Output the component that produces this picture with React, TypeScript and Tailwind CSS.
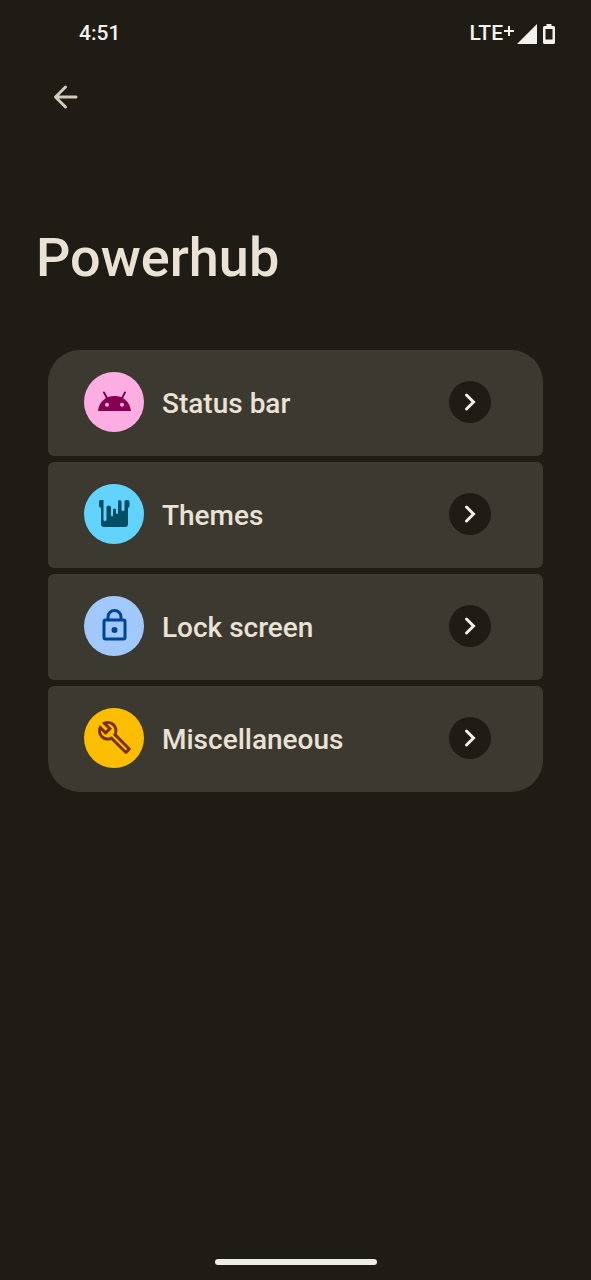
import type { ReactNode } from "react";

function StatusBar() {
  return (
    <header className="flex h-[68px] items-center justify-between pl-[79px] pr-9 text-[21px] font-medium text-[#f4f2ee]">
      <time>4:51</time>
      <div className="flex items-center">
        <span>LTE</span>
        <svg className="mb-1.5 ml-px h-[10px] w-[10px]" viewBox="0 0 10 10" stroke="currentColor" strokeWidth="2">
          <path d="M5 0v10M0 5h10" />
        </svg>
        <svg className="ml-[3px] h-5 w-5" viewBox="0 0 20 20" fill="currentColor" role="img" aria-label="Signal strength">
          <path d="M0 20 20 0v20z" />
        </svg>
        <svg className="ml-[6px] h-5 w-3" viewBox="0 0 12 20" fill="currentColor" role="img" aria-label="Battery">
          <path
            fillRule="evenodd"
            d="M3.500 0h5v2H10.500Q12 2 12 3.500v15Q12 20 10.500 20h-9Q0 20 0 18.500v-15Q0 2 1.500 2h2zM2.500 5v10.500h7V5z"
          />
        </svg>
      </div>
    </header>
  );
}

function AndroidIcon() {
  return (
    <svg viewBox="0 0 60 60" className="h-full w-full" aria-hidden="true">
      <path d="M20 20.500 23.500 27M41 20.500 37.500 27" stroke="#850052" strokeWidth="2" strokeLinecap="round" />
      <path
        fill="#850052"
        fillRule="evenodd"
        d="M14 39C15 30 21.500 24 30.500 24S46 30 47 39zM23 30.700a2 2 0 1 0 0 4 2 2 0 0 0 0-4zM38 30.700a2 2 0 1 0 0 4 2 2 0 0 0 0-4z"
      />
    </svg>
  );
}

function ThemesIcon() {
  return (
    <svg viewBox="0 0 60 60" className="h-full w-full" aria-hidden="true">
      <path
        fill="#004d66"
        d="M16.500 16H19.500V35.500Q19.500 37 21 37T22.500 35.500V23Q22.500 21.500 24.500 21.500T27 23V31Q27 32.500 28 32.500T29 31V26Q29 24.500 30.500 24.500T32 26V28.500Q32 30 33 30T34 28.500V17.500Q34 16 35.500 16T37.500 17.500V25.500Q37.500 27 39 27T40.500 25.500V17.500Q40.500 16 42 16H43.500Q45.500 16 45.500 18V22.500L44 24V40Q44 43 41 43H20Q17 43 17 40V24L15 22.500V18Q15 16 16.500 16z"
      />
    </svg>
  );
}

function LockIcon() {
  return (
    <svg viewBox="0 0 60 60" className="h-full w-full" fill="none" stroke="#004494" strokeWidth="3" aria-hidden="true">
      <rect x="20" y="24" width="21" height="19" rx="1.500" />
      <path d="M24 24v-3a6.500 6.500 0 0 1 13 0v3" />
      <circle cx="30.500" cy="34" r="3" fill="#004494" stroke="none" />
    </svg>
  );
}

function WrenchIcon() {
  return (
    <svg viewBox="0 0 60 60" className="h-full w-full" fill="#7d3300" aria-hidden="true">
      <path
        transform="translate(12.500 11.500) scale(1.500)"
        d="M22.610 18.990l-9.080-9.080c.93-2.340.45-5.100-1.440-7C9.790.61 6.210.4 3.660 2.260L7.500 6.110 6.080 7.520 2.250 3.690C.39 6.230.6 9.820 2.900 12.110c1.860 1.860 4.570 2.350 6.890 1.480l9.110 9.110c.39.39 1.020.39 1.410 0l2.300-2.300c.4-.38.4-1.010 0-1.410zm-3 1.600l-9.460-9.460c-.61.45-1.290.72-2 .82-1.360.2-2.790-.21-3.830-1.250C3.370 9.760 2.930 8.500 3 7.260l3.090 3.090 4.240-4.240-3.090-3.090c1.240-.07 2.490.37 3.440 1.310 1.080 1.080 1.490 2.570 1.240 3.960-.12.71-.42 1.370-.88 1.960l9.450 9.450-.88.89z"
      />
    </svg>
  );
}

type Entry = { label: string; href: string; badge: string; icon: ReactNode };

const entries: Entry[] = [
  { label: "Status bar", href: "#status-bar", badge: "bg-[#ffaee4]", icon: <AndroidIcon /> },
  { label: "Themes", href: "#themes", badge: "bg-[#62d3ff]", icon: <ThemesIcon /> },
  { label: "Lock screen", href: "#lock-screen", badge: "bg-[#a1c9ff]", icon: <LockIcon /> },
  { label: "Miscellaneous", href: "#miscellaneous", badge: "bg-[#fdbd00]", icon: <WrenchIcon /> },
];

function EntryRow({ label, href, badge, icon }: Entry) {
  return (
    <li className="overflow-hidden rounded-md bg-[#3c3931] first:rounded-t-[32px] last:rounded-b-[32px]">
      <a href={href} className="flex h-[106px] items-center pb-0.5 pl-9 pr-[52px]">
        <span className={`h-[60px] w-[60px] shrink-0 rounded-full ${badge}`}>{icon}</span>
        <span className="ml-[18px] flex-1 pt-[3px] text-[28px] font-medium text-[#e9e2d5]">{label}</span>
        <span className="flex h-[42px] w-[42px] shrink-0 items-center justify-center rounded-full bg-[#1f1c16]">
          <svg
            viewBox="0 0 42 42"
            className="h-full w-full"
            fill="none"
            stroke="#f4f0e6"
            strokeWidth="3"
            strokeLinecap="round"
            strokeLinejoin="miter"
            aria-hidden="true"
          >
            <path d="M17.500 14 24.500 21l-7 7" />
          </svg>
        </span>
      </a>
    </li>
  );
}

export default function App() {
  return (
    <div className="flex min-h-screen flex-col bg-[#1f1c16] font-['Roboto',sans-serif]">
      <StatusBar />
      <nav className="flex px-12">
        <button type="button" aria-label="Back" className="flex h-14 w-9 items-center justify-center text-[#d3cabd]">
          <svg
            viewBox="0 0 36 36"
            className="h-9 w-9"
            fill="none"
            stroke="currentColor"
            strokeWidth="3"
            strokeLinecap="round"
            strokeLinejoin="round"
          >
            <path d="M28 19H7.500M17.500 9 7.500 19l10 10" />
          </svg>
        </button>
      </nav>
      <main className="flex-1">
        <h1 className="mt-[98px] px-9 text-[54px] leading-[72px] font-medium text-[#e9e2d5]">Powerhub</h1>
        <ul className="mx-12 mt-14 flex flex-col gap-[6px]">
          {entries.map((entry) => (
            <EntryRow key={entry.label} {...entry} />
          ))}
        </ul>
      </main>
      <footer className="flex justify-center pb-[15px]">
        <div className="h-[6px] w-[162px] rounded-full bg-[#eeece8]" />
      </footer>
    </div>
  );
}
